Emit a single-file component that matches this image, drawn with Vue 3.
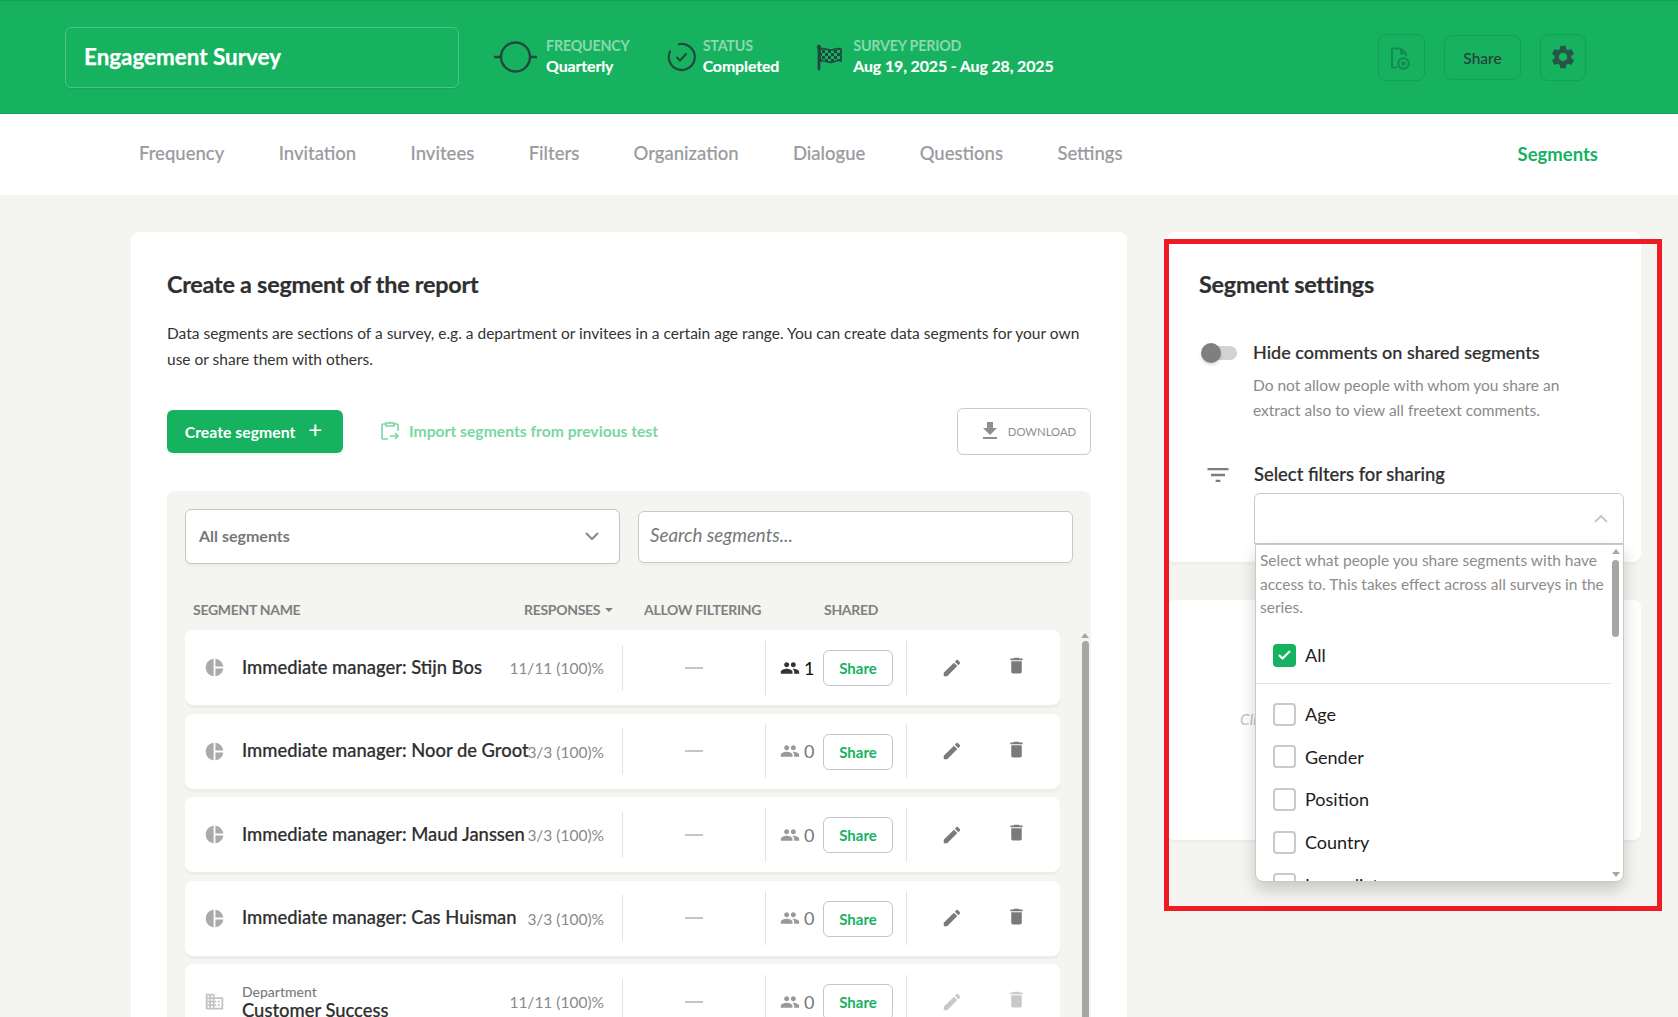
<script setup>
const tabs = ['Frequency', 'Invitation', 'Invitees', 'Filters', 'Organization', 'Dialogue', 'Questions', 'Settings']
const rows = [
  { name: 'Immediate manager: Stijn Bos', resp: '11/11 (100)%', count: 1, active: true },
  { name: 'Immediate manager: Noor de Groot', resp: '3/3 (100)%', count: 0 },
  { name: 'Immediate manager: Maud Janssen', resp: '3/3 (100)%', count: 0 },
  { name: 'Immediate manager: Cas Huisman', resp: '3/3 (100)%', count: 0 },
  { name: 'Customer Success', kind: 'Department', resp: '11/11 (100)%', count: 0, dim: true }
]
const filters = ['Age', 'Gender', 'Position', 'Country', 'Immediate manager']
const paths = {
  gear: 'M19.14 12.94c.04-.3.06-.61.06-.94 0-.32-.02-.64-.07-.94l2.03-1.58c.18-.14.23-.41.12-.61l-1.92-3.32c-.12-.22-.37-.29-.59-.22l-2.39.96c-.5-.38-1.03-.7-1.62-.94l-.36-2.54c-.04-.24-.24-.41-.48-.41h-3.84c-.24 0-.43.17-.47.41l-.36 2.54c-.59.24-1.13.57-1.62.94l-2.39-.96c-.22-.08-.47 0-.59.22L2.74 8.87c-.12.21-.08.47.12.61l2.03 1.58c-.05.3-.09.63-.09.94s.02.64.07.94l-2.03 1.58c-.18.14-.23.41-.12.61l1.92 3.32c.12.22.37.29.59.22l2.39-.96c.5.38 1.03.7 1.62.94l.36 2.54c.05.24.24.41.48.41h3.84c.24 0 .44-.17.47-.41l.36-2.54c.59-.24 1.13-.56 1.62-.94l2.39.96c.22.08.47 0 .59-.22l1.92-3.32c.12-.22.07-.47-.12-.61l-2.01-1.58zM12 15.6c-1.98 0-3.6-1.62-3.6-3.6s1.62-3.6 3.6-3.6 3.6 1.62 3.6 3.6-1.62 3.6-3.6 3.6z',
  people: 'M16 11c1.66 0 2.99-1.34 2.99-3S17.66 5 16 5c-1.66 0-3 1.34-3 3s1.34 3 3 3zm-8 0c1.66 0 2.99-1.34 2.99-3S9.66 5 8 5C6.34 5 5 6.34 5 8s1.34 3 3 3zm0 2c-2.33 0-7 1.17-7 3.5V19h14v-2.5c0-2.33-4.67-3.5-7-3.5zm8 0c-.29 0-.62.02-.97.05 1.16.84 1.97 1.97 1.97 3.45V19h6v-2.5c0-2.33-4.67-3.5-7-3.5z',
  edit: 'M3 17.25V21h3.75L17.81 9.94l-3.75-3.75L3 17.25zM20.71 7.04c.39-.39.39-1.02 0-1.41l-2.34-2.34c-.39-.39-1.02-.39-1.41 0l-1.83 1.83 3.75 3.75 1.83-1.83z',
  trash: 'M6 19c0 1.1.9 2 2 2h8c1.1 0 2-.9 2-2V7H6v12zM19 4h-3.5l-1-1h-5l-1 1H5v2h14V4z',
  download: 'M19 9h-4V3H9v6H5l7 7 7-7zM5 18v2h14v-2H5z',
  filter: 'M10 18h4v-2h-4v2zM3 6v2h18V6H3zm3 7h12v-2H6v2z',
  pie: 'M11 2v20c-5.07-.5-9-4.79-9-10s3.93-9.5 9-10zm2.03 0v8.99H22c-.47-4.74-4.24-8.52-8.97-8.99zm0 11.01V22c4.74-.47 8.5-4.25 8.97-8.99h-8.97z',
  domain: 'M12 7V3H2v18h20V7H12zM6 19H4v-2h2v2zm0-4H4v-2h2v2zm0-4H4V9h2v2zm0-4H4V5h2v2zm4 12H8v-2h2v2zm0-4H8v-2h2v2zm0-4H8V9h2v2zm0-4H8V5h2v2zm10 12h-8v-2h2v-2h-2v-2h2v-2h-2V9h8v10zm-2-8h-2v2h2v-2zm0 4h-2v2h2v-2z'
}
</script>

<template>
  <div class="page">
    <header class="top">
      <div class="title-box">Engagement Survey</div>
      <div class="meta freq">
        <svg class="m-icon" width="43" height="32" viewBox="0 0 43 32"><circle cx="21.5" cy="16" r="14.5" fill="none" stroke="#20493d" stroke-width="2.4"/><path d="M0 16h7M36 16h7" stroke="#20493d" stroke-width="2.4"/></svg>
        <div><div class="m-label">FREQUENCY</div><div class="m-value">Quarterly</div></div>
      </div>
      <div class="meta status">
        <svg class="m-icon" width="29" height="30" viewBox="0 0 29 30"><path d="M12 2.300A13 13 0 1 1 3 9.500" fill="none" stroke="#20493d" stroke-width="2.2" stroke-linecap="round"/><path d="M9.500 15l3.500 3.500 6.500-7" fill="none" stroke="#20493d" stroke-width="2"/></svg>
        <div><div class="m-label">STATUS</div><div class="m-value">Completed</div></div>
      </div>
      <div class="meta period">
        <svg class="m-icon" width="27" height="27" viewBox="0 0 27 27">
          <defs>
            <pattern id="chk" width="6" height="6" patternUnits="userSpaceOnUse">
              <rect width="3" height="3" fill="#20493d"/>
              <rect x="3" y="3" width="3" height="3" fill="#20493d"/>
            </pattern>
          </defs>
          <path d="M3 3v22" stroke="#20493d" stroke-width="2.800" stroke-linecap="round"/>
          <circle cx="3" cy="3" r="2.200" fill="#20493d"/>
          <path d="M4 5c4-2 8 2 12 1 3-.7 6-2.500 9-1v12c-3-1.500-6 .5-9 1.200-4 1-8-3-12-1z" fill="url(#chk)" stroke="#20493d" stroke-width="1.600"/>
        </svg>
        <div><div class="m-label">SURVEY PERIOD</div><div class="m-value">Aug 19, 2025 - Aug 28, 2025</div></div>
      </div>
      <div class="top-actions">
        <button class="top-btn doc">
          <svg width="24" height="26" viewBox="0 0 24 26"><path d="M11 4.500H3a1 1 0 0 0-1 1v17a1 1 0 0 0 1 1h4M11 4.500l5 5v3M11 4.500v5h5" fill="none" stroke="#128a50" stroke-width="2"/><circle cx="13.500" cy="19.500" r="5.300" fill="none" stroke="#128a50" stroke-width="2"/><circle cx="13.500" cy="19.500" r="2.300" fill="#128a50"/></svg>
        </button>
        <button class="top-btn share">Share</button>
        <button class="top-btn cog">
          <svg width="28" height="28" viewBox="0 0 24 24"><path :d="paths.gear" fill="#275647"/></svg>
        </button>
      </div>
    </header>

    <nav class="tabs">
      <a v-for="t in tabs" :key="t" class="tab">{{ t }}</a>
      <a class="tab current">Segments</a>
    </nav>

    <main class="main">
      <section class="card left">
        <h2>Create a segment of the report</h2>
        <p class="intro">Data segments are sections of a survey, e.g. a department or invitees in a certain age range. You can create data segments for your own use or share them with others.</p>
        <div class="actions">
          <button class="create">Create segment <span class="plus">+</span></button>
          <a class="import">
            <svg width="18" height="20" viewBox="0 0 18 20"><path d="M5 3H2a1 1 0 0 0-1 1v13a1 1 0 0 0 1 1h5M13 3h3a1 1 0 0 1 1 1v6M5 2h8v3H5zM9 2V0.500" fill="none" stroke="#7ad6a3" stroke-width="1.6"/><path d="M9 15h8M14 12l3 3-3 3" fill="none" stroke="#7ad6a3" stroke-width="1.6"/></svg>
            <span>Import segments from previous test</span>
          </a>
          <button class="download">
            <svg width="24" height="24" viewBox="0 0 24 24"><path :d="paths.download" fill="#8f8f8f"/></svg>
            <span>DOWNLOAD</span>
          </button>
        </div>

        <div class="panel">
          <div class="controls">
            <div class="select-all">
              <span>All segments</span>
              <svg width="16" height="10" viewBox="0 0 16 10"><path d="M2 2l6 6 6-6" fill="none" stroke="#8a8a8a" stroke-width="2"/></svg>
            </div>
            <div class="search">Search segments...</div>
          </div>
          <div class="thead">
            <span class="th-name">SEGMENT NAME</span>
            <span class="th-resp">RESPONSES <i class="caret"></i></span>
            <span class="th-allow">ALLOW FILTERING</span>
            <span class="th-shared">SHARED</span>
          </div>
          <div class="list-wrap">
            <div class="list">
              <div v-for="r in rows" :key="r.name" class="row">
                <div class="name-cell">
                  <svg class="kind-icon" width="21" height="21" viewBox="0 0 24 24"><path :d="r.kind ? paths.domain : paths.pie" :fill="r.kind ? '#c4c4c4' : '#aaaaaa'"/></svg>
                  <div class="name-text">
                    <div v-if="r.kind" class="kind">{{ r.kind }}</div>
                    <div class="name">{{ r.name }}</div>
                  </div>
                  <div class="resp">{{ r.resp }}</div>
                </div>
                <div class="allow"><i class="dash"></i></div>
                <div class="shared">
                  <svg width="20" height="20" viewBox="0 0 24 24"><path :d="paths.people" :fill="r.active ? '#333333' : '#999999'"/></svg>
                  <span class="count" :class="{ on: r.active }">{{ r.count }}</span>
                  <button class="share-btn">Share</button>
                </div>
                <div class="ops" :class="{ dim: r.dim }">
                  <svg width="22" height="22" viewBox="0 0 24 24"><path :d="paths.edit"/></svg>
                  <svg class="trash" width="21" height="21" viewBox="0 0 24 24"><path :d="paths.trash"/></svg>
                </div>
              </div>
            </div>
            <div class="track">
              <i class="arrow-up"></i>
              <i class="thumb"></i>
            </div>
          </div>
        </div>
      </section>

      <aside class="side">
        <section class="card settings">
          <h2>Segment settings</h2>
          <div class="toggle-row">
            <div class="toggle"><i class="knob"></i></div>
            <div>
              <div class="s-head">Hide comments on shared segments</div>
              <p class="s-desc">Do not allow people with whom you share an extract also to view all freetext comments.</p>
            </div>
          </div>
          <div class="filter-row">
            <svg class="filter-icon" width="28" height="28" viewBox="0 0 24 24"><path :d="paths.filter" fill="#7d7d7d"/></svg>
            <div class="filter-col">
              <div class="s-head wide">Select filters for sharing</div>
              <div class="multi">
                <svg width="16" height="10" viewBox="0 0 16 10"><path d="M2 8l6-6 6 6" fill="none" stroke="#c8c8c8" stroke-width="2"/></svg>
                <div class="drop">
                  <div class="drop-scroll">
                    <p class="drop-note">Select what people you share segments with have access to. This takes effect across all surveys in the series.</p>
                    <label class="opt all">
                      <span class="box checked"><svg width="15" height="12" viewBox="0 0 15 12"><path d="M2 6l3.500 3.500L13 2" fill="none" stroke="#fff" stroke-width="2"/></svg></span>
                      All
                    </label>
                    <div class="drop-line"></div>
                    <label v-for="f in filters" :key="f" class="opt">
                      <span class="box"></span>{{ f }}
                    </label>
                  </div>
                  <div class="drop-track">
                    <i class="arrow-up small"></i>
                    <i class="drop-thumb"></i>
                    <i class="arrow-down"></i>
                  </div>
                </div>
              </div>
            </div>
          </div>
        </section>
        <section class="card second">
          <span class="hint">Click a segment</span>
        </section>
      </aside>
    </main>
    <div class="frame"></div>
  </div>
</template>

<style>
html, body { margin: 0; padding: 0; background: #f4f4f0; }
</style>

<style scoped>
.page {
  position: relative;
  width: 1678px;
  height: 1017px;
  overflow: hidden;
  display: flex;
  flex-direction: column;
  background: #f4f4f0;
  font-family: Lato, "Liberation Sans", sans-serif;
  color: #2f2f2f;
}
.top {
  height: 114px;
  flex: none;
  box-sizing: border-box;
  display: flex;
  align-items: center;
  padding: 0 92px 0 65px;
  background: #16b25f;
  border-top: 1px solid #13a356;
  border-bottom: 1px solid #13a559;
}
.title-box {
  width: 394px;
  height: 61px;
  box-sizing: border-box;
  margin-top: 1px;
  padding: 0 0 2px 18px;
  display: flex;
  align-items: center;
  border: 1px solid #4cc585;
  border-radius: 6px;
  color: #fff;
  font-size: 22.400px;
  font-weight: 700;
  -webkit-text-stroke: .25px #fff;
  box-shadow: 0 1px 2px rgba(0, 0, 0, .08);
}
.meta { display: flex; align-items: center; }
.freq { margin-left: 35px; }
.status { margin-left: 37px; }
.period { margin-left: 37px; }
.m-icon { margin-right: 9px; flex: none; }
.status .m-icon { margin-right: 7px; }
.period .m-icon { margin-right: 10px; }
.m-label { color: #8ad9ae; font-size: 14.300px; font-weight: 700; line-height: 20px; letter-spacing: -.2px; margin-top: -2px; }
.m-value { color: #fff; font-size: 15.900px; font-weight: 700; line-height: 20px; letter-spacing: -.1px; -webkit-text-stroke: .15px #fff; }
.top-actions { margin-left: auto; display: flex; align-items: center; gap: 19px; }
.top-btn {
  padding: 0;
  display: flex;
  align-items: center;
  justify-content: center;
  background: transparent;
  border: 1px solid #12a155;
  border-radius: 8px;
  font-family: inherit;
  color: #2b3a3a;
  font-size: 15.500px;
  font-weight: 500;
}
.doc { width: 47px; height: 47px; }
.cog { width: 46px; height: 47px; }
.share { width: 77px; height: 45px; margin-top: 1px; }
.tabs {
  height: 81px;
  flex: none;
  box-sizing: border-box;
  display: flex;
  align-items: center;
  padding: 0 80px 4px 139px;
  background: #fff;
}
.tab { margin-right: 54.400px; color: #9a9ba0; font-size: 18.500px; font-weight: 500; -webkit-text-stroke: .15px #9a9ba0; }
.tab.current { margin-left: auto; margin-right: 0; color: #16b25f; font-weight: 700; -webkit-text-stroke: 0; padding-top: 2px; }
.main {
  flex: 1;
  min-height: 0;
  display: flex;
  align-items: flex-start;
  gap: 40px;
  padding: 37px 37px 0 131px;
}
.card { background: #fff; border-radius: 8px; box-sizing: border-box; box-shadow: 0 3px 0 rgba(0, 0, 0, .025); }
h2 { margin: 0; font-size: 23.400px; line-height: 30px; font-weight: 700; color: #2f2f2f; letter-spacing: -.25px; -webkit-text-stroke: .2px #2f2f2f; }
.left { width: 996px; height: 900px; flex: none; padding: 37px 36px 0 36px; }
.intro { margin: 22px 0 0; font-size: 15.500px; line-height: 25.500px; color: #333; }
.actions { display: flex; align-items: center; margin-top: 36px; height: 46px; }
.create {
  width: 176px;
  height: 43px;
  padding: 0 3px 0 0;
  border: 0;
  border-radius: 6px;
  background: #16b25f;
  color: #fff;
  font-family: inherit;
  font-size: 15.800px;
  font-weight: 700;
  box-shadow: 0 3px 0 rgba(0, 0, 0, .03);
  display: flex;
  align-items: center;
  justify-content: center;
  gap: 13px;
}
.plus { font-size: 24px; font-weight: 400; line-height: 20px; margin-top: -4px; }
.import { margin-left: 38px; display: flex; align-items: center; gap: 10px; color: #7ad6a3; font-size: 15.700px; font-weight: 700; }
.download {
  margin-left: auto;
  width: 134px;
  height: 47px;
  padding: 0 0 0 6px;
  border: 1px solid #c9c9d0;
  border-radius: 6px;
  background: #fff;
  color: #8f8f8f;
  font-family: inherit;
  font-size: 11.300px;
  display: flex;
  align-items: center;
  justify-content: center;
  gap: 6px;
}
.panel { margin-top: 37px; background: #f4f4f0; border-radius: 8px; padding: 18px 0 0 18px; height: 600px; }
.controls { display: flex; align-items: center; gap: 18px; }
.select-all {
  width: 435px;
  height: 55px;
  flex: none;
  box-sizing: border-box;
  padding: 0 19px 2px 13px;
  display: flex;
  align-items: center;
  justify-content: space-between;
  background: #fff;
  border: 1px solid #c4c4c4;
  border-radius: 6px;
  box-shadow: 0 3px 0 rgba(0, 0, 0, .025);
  color: #777;
  font-size: 16px;
  font-weight: 700;
}
.search {
  width: 435px;
  height: 52px;
  flex: none;
  box-sizing: border-box;
  padding: 0 0 3px 11px;
  display: flex;
  align-items: center;
  background: #fff;
  border: 1px solid #c9c9c9;
  border-radius: 6px;
  box-shadow: 0 3px 0 rgba(0, 0, 0, .025);
  color: #777;
  font-size: 18.700px;
  font-style: italic;
}
.thead {
  display: flex;
  align-items: center;
  height: 20px;
  margin-top: 35px;
  padding-left: 8px;
  color: #808080;
  font-size: 14px;
  font-weight: 700;
  letter-spacing: -.3px;
  white-space: nowrap;
}
.th-name { width: 331px; }
.th-resp { width: 120px; display: flex; align-items: center; gap: 5px; }
.caret { display: inline-block; border: 4.500px solid transparent; border-top-color: #808080; border-bottom: 0; margin-top: 2px; }
.th-allow { width: 180px; }
.list-wrap { display: flex; margin-top: 11px; gap: 21px; }
.list { width: 875px; flex: none; display: flex; flex-direction: column; gap: 8.500px; }
.row {
  height: 75px;
  flex: none;
  display: flex;
  align-items: center;
  background: #fff;
  border-radius: 8px;
  box-shadow: 0 3px 0 rgba(0, 0, 0, .03);
}
.name-cell { width: 438px; height: 46px; box-sizing: border-box; padding: 0 18px 0 18.500px; display: flex; align-items: center; border-right: 1px solid #e2e2e2; }
.kind-icon { flex: none; margin-right: 17.500px; }
.name-text { flex: 1; min-width: 0; white-space: nowrap; margin-top: -2px; }
.kind { font-size: 14px; line-height: 14px; color: #7c7c7c; font-weight: 500; margin-top: 5px; }
.name { font-size: 18.400px; font-weight: 500; color: #2f2f2f; -webkit-text-stroke: .2px #2f2f2f; }
.resp { flex: none; color: #8a8a8a; font-size: 15.500px; margin-top: 1px; }
.allow { width: 142px; display: flex; justify-content: center; }
.dash { display: block; width: 18px; height: 2px; background: #c6c6c6; margin-right: 0; }
.shared { width: 142px; height: 54px; box-sizing: border-box; padding-left: 14px; display: flex; align-items: center; border-left: 1px solid #e2e2e2; border-right: 1px solid #e2e2e2; }
.count { margin-left: 4px; font-size: 18px; width: 19px; color: #777; }
.count.on { color: #111; }
.share-btn {
  width: 70px;
  height: 36px;
  padding: 0;
  background: #fff;
  border: 1px solid #c6c6c6;
  border-radius: 6px;
  color: #16b25f;
  font-family: inherit;
  font-size: 15px;
  font-weight: 700;
  margin-top: 1px;
}
.ops { flex: 1; display: flex; align-items: center; padding-left: 34px; gap: 43px; fill: #7a7a7a; }
.ops.dim { fill: #c8c8c8; }
.trash { margin-top: -4px; }
.track { width: 8px; display: flex; flex-direction: column; align-items: center; margin-top: 3px; }
.arrow-up { display: block; width: 0; height: 0; border: 4px solid transparent; border-bottom: 5px solid #a6a6a4; border-top: 0; }
.thumb { display: block; width: 7px; height: 420px; margin-top: 3px; border-radius: 4px; background: #a6a6a4; }

.side { width: 474px; flex: none; display: flex; flex-direction: column; gap: 38px; }
.settings { height: 330px; padding: 37px 0 0 32px; }
.toggle-row { display: flex; margin-top: 40px; }
.toggle { position: relative; width: 34px; height: 14px; margin: 7px 0 0 4px; background: #d2d2d2; border-radius: 7px; flex: none; }
.knob { position: absolute; left: -2px; top: -3px; width: 20px; height: 20px; border-radius: 50%; background: #7f7f7f; box-shadow: 0 2px 3px rgba(0, 0, 0, .15); }
.toggle + div { margin-left: 16px; width: 345px; }
.s-head { font-size: 18px; font-weight: 500; line-height: 26px; color: #2f2f2f; -webkit-text-stroke: .2px #2f2f2f; }
.s-head.wide { font-size: 18.400px; }
.s-desc { margin: 8px 0 0; font-size: 15.500px; line-height: 25px; color: #8a8a8a; }
.filter-row { display: flex; margin-top: 38px; }
.filter-icon { flex: none; margin: 0 0 0 5px; }
.filter-col { margin-left: 22px; width: 370px; }
.multi {
  position: relative;
  height: 51px;
  margin-top: 6px;
  box-sizing: border-box;
  border: 1px solid #c9c9c9;
  border-radius: 6px 6px 0 0;
  background: #fff;
  display: flex;
  align-items: center;
  justify-content: flex-end;
  padding-right: 14px;
}
.drop {
  position: absolute;
  left: 0;
  top: 50px;
  width: 369px;
  height: 338px;
  box-sizing: border-box;
  overflow: hidden;
  display: flex;
  background: #fff;
  border: 1px solid #c9c9c9;
  border-radius: 0 0 8px 8px;
  box-shadow: 0 8px 16px rgba(0, 0, 0, .18);
  z-index: 3;
}
.drop-scroll { flex: 1; min-width: 0; overflow: hidden; }
.drop-note { margin: 4px 0 0 4px; font-size: 15.500px; line-height: 23.500px; color: #8c8c8c; width: 345px; }
.opt { display: flex; align-items: center; gap: 9.500px; height: 23px; margin: 0 0 19.700px 16.500px; font-size: 18px; color: #1c1c1c; }
.opt.all { margin-top: 24px; margin-bottom: 16px; }
.drop-line { height: 1px; background: #e2e2e2; margin: 0 -2px 19px 0; width: 356px; }
.box { width: 23px; height: 23px; box-sizing: border-box; border: 2px solid #c9c9c9; border-radius: 4px; flex: none; display: flex; align-items: center; justify-content: center; }
.box.checked { background: #16b25f; border-color: #16b25f; }
.drop-track { position: relative; width: 10px; flex: none; margin-right: 2px; }
.drop-track .arrow-up { position: absolute; top: 4px; left: 1px; }
.arrow-down { position: absolute; bottom: 4px; left: 1px; display: block; width: 0; height: 0; border: 4px solid transparent; border-top: 5px solid #a6a6a4; border-bottom: 0; }
.drop-thumb { position: absolute; top: 15px; left: 1px; width: 7px; height: 77px; border-radius: 4px; background: #a6a6a4; }
.second { position: relative; height: 240px; display: flex; align-items: center; padding-left: 73px; }
.hint { color: #c0c0c0; font-size: 15.500px; font-style: italic; margin-top: -2px; white-space: nowrap; }
.frame {
  position: absolute;
  left: 1164px;
  top: 239px;
  width: 498px;
  height: 672px;
  box-sizing: border-box;
  border: 5px solid #ed1c24;
  pointer-events: none;
}
</style>
